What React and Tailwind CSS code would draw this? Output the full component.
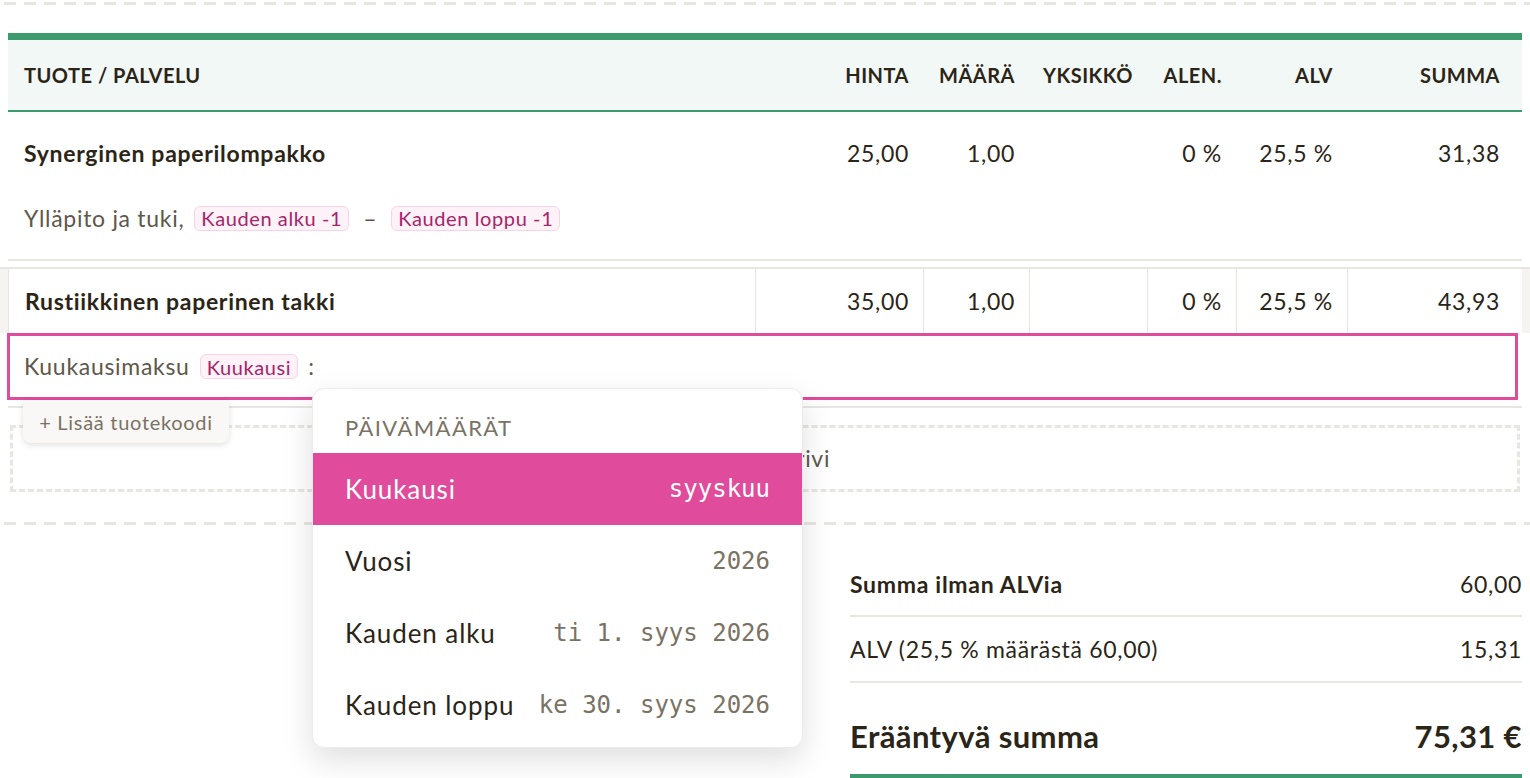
import React from "react";

const font = { fontFamily: "Lato, 'Noto Sans', sans-serif" };
const mono = { fontFamily: "'DejaVu Sans Mono', monospace" };

const dashH =
  "h-[3px] bg-[repeating-linear-gradient(to_right,transparent_0,transparent_4px,#e8e6e1_4px,#e8e6e1_16px,transparent_16px,transparent_20px)]";

const cols = "grid grid-cols-[747px_168px_106px_118px_89px_111px_167px]";

const Tag = ({ children }) => (
  <span className="inline-flex items-center h-[25px] px-[6px] rounded-[6px] border border-[#f7d3e5] bg-[#fdf2f8] text-[#a4256b] text-[20px] tracking-[0.6px] leading-none">
    {children}
  </span>
);

const heads = [
  { t: "HINTA", left: false },
  { t: "MÄÄRÄ", left: false },
  { t: "YKSIKKÖ", left: true },
  { t: "ALEN.", left: false },
  { t: "ALV", left: false },
  { t: "SUMMA", left: false },
];

const Values = ({ v, bordered }) =>
  v.map((x, i) => (
    <div
      key={i}
      className={
        "px-[14px] flex items-center " +
        (i === 2 ? "justify-start " : "justify-end ") +
        (bordered ? "border-l border-[#e8e6e1]" : "")
      }
    >
      {x}
    </div>
  ));

const menu = [
  { label: "Vuosi", value: "2026" },
  { label: "Kauden alku", value: "ti 1. syys 2026" },
  { label: "Kauden loppu", value: "ke 30. syys 2026" },
];

export default function App() {
  return (
    <div className="relative w-[1530px] h-[778px] overflow-hidden bg-white text-[#2b2518] text-[23px] tracking-[0.7px]" style={font}>
      <div className="pt-[2px]">
        <div className={dashH} />
      </div>

      {/* table head + first row */}
      <div className="mx-[8px] mt-[28px]">
        <div className={cols + " h-[79px] bg-[#f2f8f5] border-t-[7px] border-b-2 border-[#3d9a6f] text-[20px] tracking-[0.5px] font-bold"}>
          <div className="px-[16px] flex items-center">TUOTE / PALVELU</div>
          {heads.map((h) => (
            <div key={h.t} className={"px-[14px] flex items-center " + (h.left ? "justify-start" : "justify-end")}>
              {h.t}
            </div>
          ))}
        </div>

        <div className="border-b-2 border-[#e8e6e1]">
          <div className={cols + " pt-[24px] h-[54px]"}>
            <div className="px-[16px] flex items-center font-bold">Synerginen paperilompakko</div>
            <Values v={["25,00", "1,00", "", "0 %", "25,5 %", "31,38"]} />
          </div>
          <div className="px-[16px] mt-[38px] h-[28px] pb-[27px] box-content flex items-center gap-[10px] text-[#5e574a]">
            <span>Ylläpito ja tuki,</span>
            <Tag>Kauden alku -1</Tag>
            <span className="px-[4px]">–</span>
            <Tag>Kauden loppu -1</Tag>
          </div>
        </div>
      </div>

      {/* second row (hovered / editing) */}
      <div className="mt-[6px] bg-[#f5f4f1] border-t-2 border-[#e8e6e1]">
        <div className={cols + " mx-[8px] h-[64px] bg-white"}>
          <div className="px-[16px] flex items-center font-bold border-l border-[#e8e6e1]">Rustiikkinen paperinen takki</div>
          <Values v={["35,00", "1,00", "", "0 %", "25,5 %", "43,93"]} bordered />
        </div>
        <div className="bg-white">
          <div className="ml-[7px] w-[1511px] h-[67px] border-[3px] border-[#e04b9b] px-[14px] flex items-center gap-[10px] text-[#5e574a]">
            <span>Kuukausimaksu</span>
            <Tag>Kuukausi</Tag>
            <span>:</span>
          </div>
        </div>
      </div>

      <div className="mx-[8px] mt-[6px] h-[2px] bg-[#e8e6e1]" />

      <div className="mx-[10px] mt-[17px] h-[67px] border-[3px] border-dashed border-[#e8e6e1] flex items-center justify-center text-[#5e574a]">
        <span className="ml-[36px]">Lisää rivi</span>
      </div>

      <div className="mt-[30px]">
        <div className={dashH} />
      </div>

      {/* totals */}
      <div className="flex justify-end pr-[8px] mt-[28px]">
        <div className="w-[672px]">
          <div className="h-[64px] flex items-center justify-between border-b-2 border-[#e8e6e1]">
            <span className="font-bold">Summa ilman ALVia</span>
            <span>60,00</span>
          </div>
          <div className="h-[66px] flex items-center justify-between border-b-2 border-[#e8e6e1]">
            <span>ALV (25,5 % määrästä 60,00)</span>
            <span>15,31</span>
          </div>
          <div className="h-[95px] pt-[16px] flex items-center justify-between border-b-4 border-[#3d9a6f] text-[31px] tracking-[0.4px] font-bold">
            <span>Erääntyvä summa</span>
            <span>75,31 €</span>
          </div>
        </div>
      </div>

      {/* add product code button */}
      <div className="absolute left-[23px] top-[400px] w-[206px] h-[43px] rounded-b-[8px] bg-[#f9f8f6] shadow-[0_2px_6px_rgba(0,0,0,0.12)] flex items-center justify-center text-[20px] text-[#7a7263]">
        + Lisää tuotekoodi
      </div>

      {/* dropdown */}
      <div className="absolute left-[312px] top-[388px] w-[491px] h-[360px] bg-white rounded-[12px] border border-[#ececea] shadow-[0_12px_32px_rgba(0,0,0,0.13)] overflow-hidden">
        <div className="h-[64px] px-[32px] flex items-end pb-[9px] text-[22px] tracking-[1.4px] text-[#7a7263]">
          PÄIVÄMÄÄRÄT
        </div>
        <div className="h-[72px] px-[32px] flex items-center justify-between bg-[#e04b9b] text-white">
          <span className="text-[26px] tracking-[0.9px]">Kuukausi</span>
          <span className="text-[24px] tracking-normal" style={mono}>syyskuu</span>
        </div>
        {menu.map((m) => (
          <div key={m.label} className="h-[72px] px-[32px] flex items-center justify-between">
            <span className="text-[26px] tracking-[0.9px] text-[#2b2518]">{m.label}</span>
            <span className="text-[24px] tracking-normal text-[#7a7263]" style={mono}>
              {m.value}
            </span>
          </div>
        ))}
      </div>
    </div>
  );
}
